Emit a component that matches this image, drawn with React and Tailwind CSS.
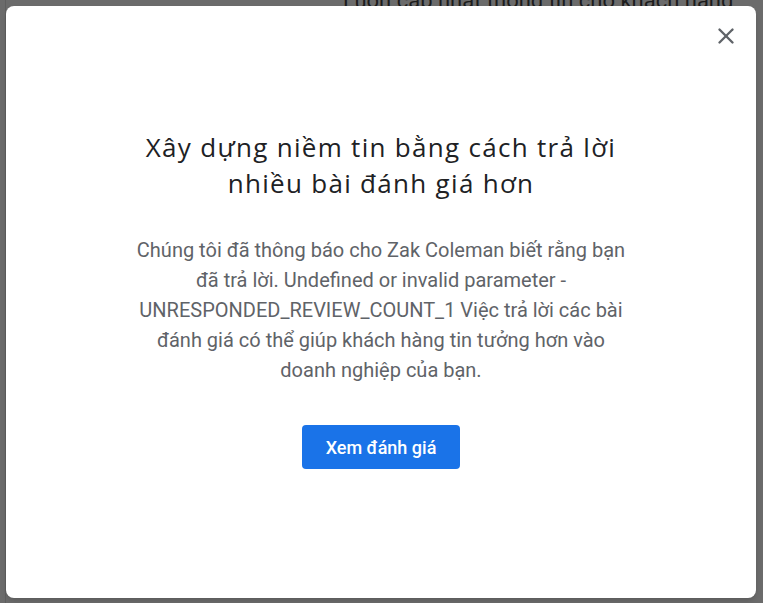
import { X } from 'lucide-react';

export default function App() {
  return (
    <div className="relative h-[603px] w-[763px] overflow-hidden bg-[#6b6b6b] font-['Roboto',sans-serif]">
      {/* dimmed page behind the dialog */}
      <div className="flex h-full">
        <div className="w-[6px] border-r border-[#5f5f5f]" />
        <div className="flex-1" />
      </div>
      <p className="absolute left-[343px] top-[-16px] whitespace-nowrap text-[22px] text-[#1c1c1c]">
        Luôn cập nhật thông tin cho khách hàng
      </p>

      <div className="absolute inset-0 p-[6px] pr-[7px] pb-[5px]">
        <div className="relative flex h-full flex-col items-center rounded-lg bg-white pt-[123px] shadow-md">
          <button className="absolute right-[17px] top-[17px] text-[#5f6368]">
            <X size={26} strokeWidth={2.2} />
          </button>

          <h2 className="max-w-[520px] text-center font-['Open_Sans',sans-serif] text-[26px] leading-[36px] tracking-[1.3px] text-[#202124]">
            Xây dựng niềm tin bằng cách trả lời nhiều bài đánh giá hơn
          </h2>

          <p className="mt-[34px] max-w-[500px] text-center text-[20px] leading-[30px] text-[#5f6368]">
            Chúng tôi đã thông báo cho Zak Coleman biết rằng bạn đã trả lời. Undefined or invalid parameter - UNRESPONDED_REVIEW_COUNT_1 Việc trả lời các bài đánh giá có thể giúp khách hàng tin tưởng hơn vào doanh nghiệp của bạn.
          </p>

          <button className="mt-[40px] h-[44px] w-[158px] rounded bg-[#1a73e8] text-[18px] font-medium text-white">
            Xem đánh giá
          </button>
        </div>
      </div>
    </div>
  );
}
